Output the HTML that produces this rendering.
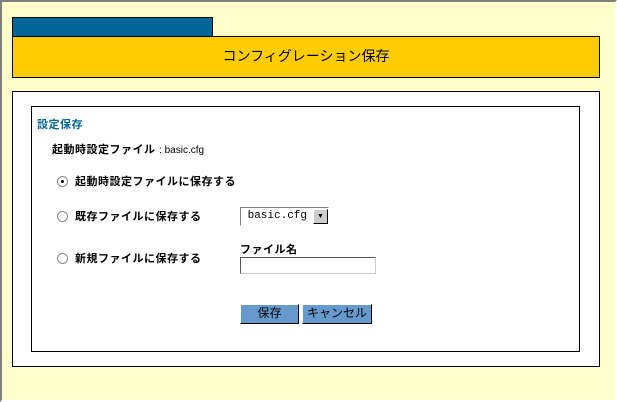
<!DOCTYPE html>
<html><head><meta charset="utf-8"><style>
body{margin:0;width:617px;height:402px;overflow:hidden;font-family:"Liberation Sans","Noto Sans CJK JP",sans-serif;}
.pg{position:absolute;left:0;top:0;width:613px;height:398px;background:#ffffcc;border:2px solid;border-color:#808080 #fff #fff #808080;}
.a{position:absolute;}
.t{font-size:11px;font-weight:bold;color:#000;white-space:nowrap;letter-spacing:0.5px;}
.r{width:9px;height:9px;border:1px solid #888;border-radius:50%;background:#fff;}
.btn{background:#6699cc;border:1px solid;border-color:#fff #000 #000 #fff;font-size:12px;text-align:center;line-height:17px;}
</style></head><body>
<div class="pg"></div>
<div class="a" style="left:12px;top:17px;width:199px;height:19px;background:#006699;border:1px solid #000;"></div>
<div class="a" style="left:12px;top:36px;width:586px;height:40px;background:#ffcc00;border:1px solid #000;"></div>
<div class="a" style="left:12px;top:47px;width:588px;text-align:center;font-size:14px;line-height:18px;">コンフィグレーション保存</div>
<div class="a" style="left:12px;top:91px;width:586px;height:274px;background:#fff;border:1px solid #000;"></div>
<div class="a" style="left:31px;top:106px;width:547px;height:244px;border:1px solid #000;"></div>
<div class="a t" style="left:37px;top:116px;color:#006699;">設定保存</div>
<div class="a t" style="left:52px;top:141px;">起動時設定ファイル <span style="font-weight:normal;font-size:10px;letter-spacing:0">: basic.cfg</span></div>
<div class="a r" style="left:57px;top:176px;"><div style="width:3px;height:3px;background:#000;margin:3px;border-radius:50%"></div></div>
<div class="a t" style="left:75px;top:173px;">起動時設定ファイルに保存する</div>
<div class="a r" style="left:57px;top:211px;"></div>
<div class="a t" style="left:75px;top:208px;">既存ファイルに保存する</div>
<div class="a r" style="left:57px;top:253px;"></div>
<div class="a t" style="left:75px;top:250px;">新規ファイルに保存する</div>
<div class="a" style="left:240px;top:207px;width:87px;height:17px;border:1px solid;border-color:#808080 #fff #fff #808080;background:#fff;font-family:'Liberation Mono',monospace;font-size:11px;line-height:17px;">&nbsp;basic.cfg</div>
<div class="a" style="left:313px;top:209px;width:13px;height:13px;background:#ccc;border:1px solid;border-color:#fff #000 #000 #fff;font-size:7px;text-align:center;line-height:13px;">▼</div>
<div class="a t" style="left:240px;top:241px;">ファイル名</div>
<div class="a" style="left:240px;top:257px;width:134px;height:15px;border:1px solid;border-color:#555 #ccc #ccc #555;background:#fff;"></div>
<div class="a btn" style="left:240px;top:304px;width:57px;height:18px;">保存</div>
<div class="a btn" style="left:302px;top:304px;width:68px;height:18px;">キャンセル</div>
</body></html>
